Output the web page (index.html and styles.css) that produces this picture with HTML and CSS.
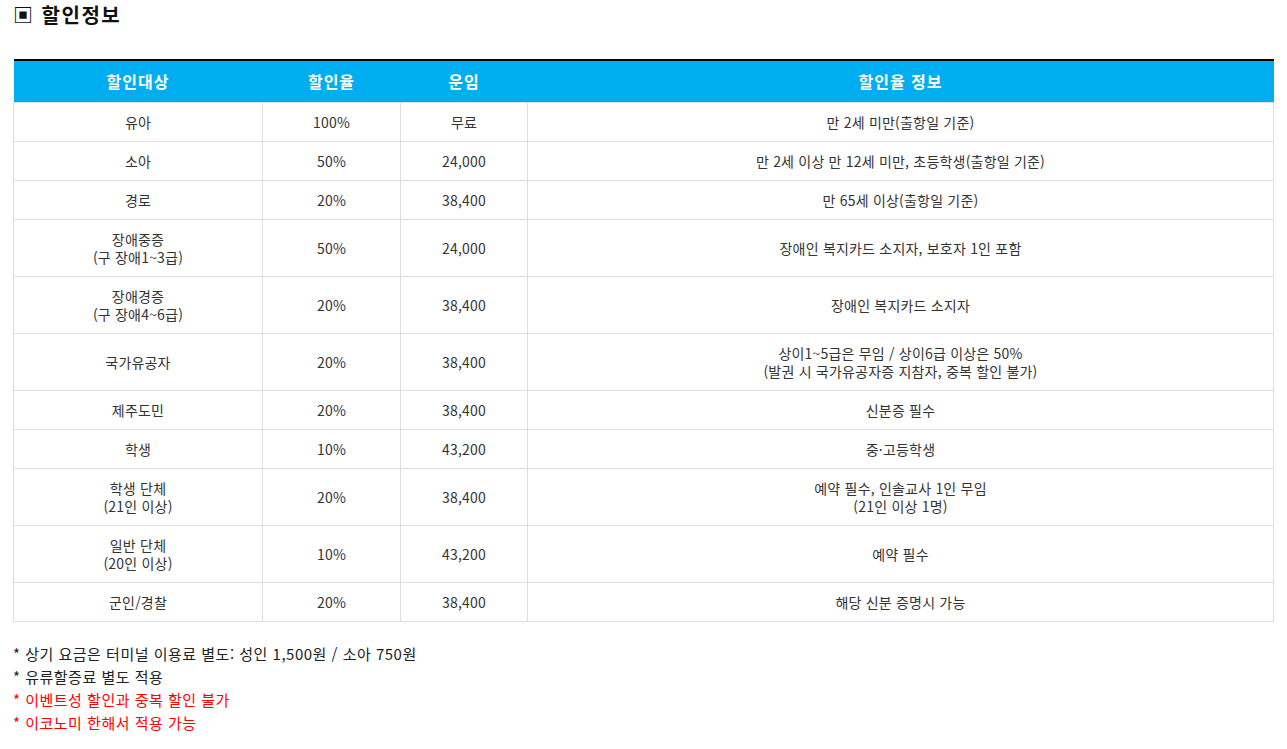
FILE: index.html
```html
<!DOCTYPE html>
<html lang="ko">
<head>
<meta charset="utf-8">
<title>할인정보</title>
<link rel="stylesheet" href="styles.css">
</head>
<body>
<div class="wrap">
  <h2 class="title">▣ 할인정보</h2>
  <table class="dc">
    <colgroup>
      <col class="c1"><col class="c2"><col class="c3"><col class="c4">
    </colgroup>
    <thead>
      <tr><th>할인대상</th><th>할인율</th><th>운임</th><th>할인율 정보</th></tr>
    </thead>
    <tbody>
      <tr><td>유아</td><td>100%</td><td>무료</td><td>만 2세 미만(출항일 기준)</td></tr>
      <tr><td>소아</td><td>50%</td><td>24,000</td><td>만 2세 이상 만 12세 미만, 초등학생(출항일 기준)</td></tr>
      <tr><td>경로</td><td>20%</td><td>38,400</td><td>만 65세 이상(출항일 기준)</td></tr>
      <tr><td>장애중증<br>(구 장애1~3급)</td><td>50%</td><td>24,000</td><td>장애인 복지카드 소지자, 보호자 1인 포함</td></tr>
      <tr><td>장애경증<br>(구 장애4~6급)</td><td>20%</td><td>38,400</td><td>장애인 복지카드 소지자</td></tr>
      <tr><td>국가유공자</td><td>20%</td><td>38,400</td><td>상이1~5급은 무임 / 상이6급 이상은 50%<br>(발권 시 국가유공자증 지참자, 중복 할인 불가)</td></tr>
      <tr><td>제주도민</td><td>20%</td><td>38,400</td><td>신분증 필수</td></tr>
      <tr><td>학생</td><td>10%</td><td>43,200</td><td>중·고등학생</td></tr>
      <tr><td>학생 단체<br>(21인 이상)</td><td>20%</td><td>38,400</td><td>예약 필수, 인솔교사 1인 무임<br>(21인 이상 1명)</td></tr>
      <tr><td>일반 단체<br>(20인 이상)</td><td>10%</td><td>43,200</td><td>예약 필수</td></tr>
      <tr><td>군인/경찰</td><td>20%</td><td>38,400</td><td>해당 신분 증명시 가능</td></tr>
    </tbody>
  </table>
  <ul class="notes">
    <li>* 상기 요금은 터미널 이용료 별도: 성인 1,500원 / 소아 750원</li>
    <li>* 유류할증료 별도 적용</li>
    <li class="red">* 이벤트성 할인과 중복 할인 불가</li>
    <li class="red">* 이코노미 한해서 적용 가능</li>
  </ul>
</div>
</body>
</html>
```
FILE: styles.css
```css
html, body {
  margin: 0;
  padding: 0;
  background: #fff;
}
body {
  font-family: "Noto Sans CJK KR", "Noto Sans", sans-serif;
  color: #333;
}
.wrap {
  padding: 0 14px 0 13px;
}
.title {
  margin: 0;
  padding-top: 1px;
  height: 58px;
  font-size: 20px;
  line-height: 28px;
  font-weight: bold;
  letter-spacing: 1.5px;
  color: #111;
}
.dc {
  width: 1260px;
  border-collapse: collapse;
  border-top: 2px solid #000;
  table-layout: fixed;
}
.c1 { width: 249px; }
.c2 { width: 138px; }
.c3 { width: 127px; }
.c4 { width: 746px; }
.dc th {
  background: #00aeef;
  color: #fff;
  font-size: 16px;
  font-weight: bold;
  line-height: 21px;
  letter-spacing: 1px;
  padding: 10px 0 10px;
  border: 0;
}
.dc td {
  border: 1px solid #ddd;
  text-align: center;
  font-size: 14px;
  line-height: 18px;
  letter-spacing: 0.2px;
  padding: 10px 0;
  color: #333;
}
.notes {
  list-style: none;
  margin: 20px 0 0;
  padding: 0;
  font-size: 15px;
  line-height: 23px;
  letter-spacing: 0.5px;
  color: #222;
}
.notes .red {
  color: #ff0000;
}
```
